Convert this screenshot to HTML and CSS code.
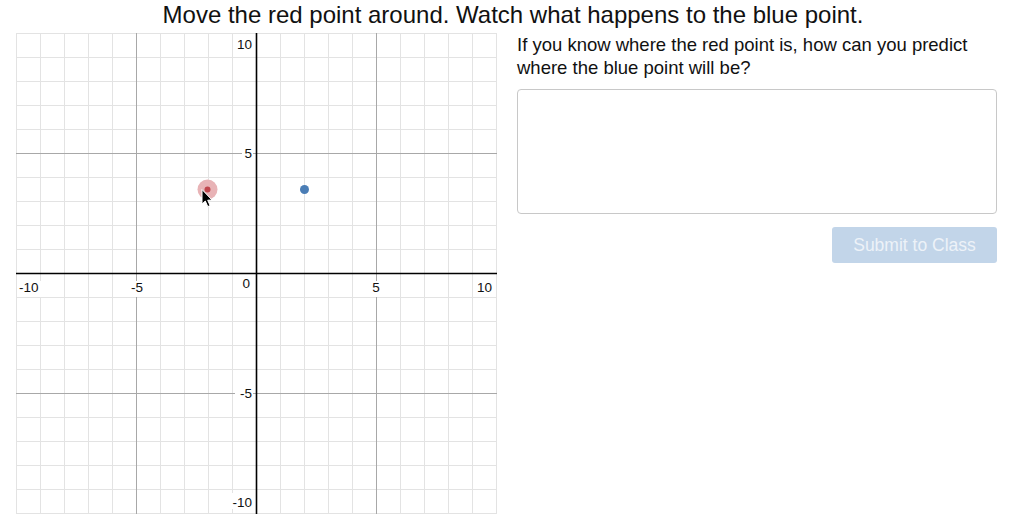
FILE: index.html
```html
<!DOCTYPE html>
<html>
<head>
<meta charset="utf-8">
<link rel="stylesheet" href="styles.css">
</head>
<body>
<h1 class="title">Move the red point around. Watch what happens to the blue point.</h1>
<main class="layout">
  <div class="graph">
    <svg width="481" height="481" viewBox="0 0 481 481" xmlns="http://www.w3.org/2000/svg">
      <g stroke="#e3e3e3" stroke-width="1" shape-rendering="crispEdges">
        <line x1="0.5" y1="0" x2="0.5" y2="481"/>
        <line x1="24.5" y1="0" x2="24.5" y2="481"/>
        <line x1="48.5" y1="0" x2="48.5" y2="481"/>
        <line x1="72.5" y1="0" x2="72.5" y2="481"/>
        <line x1="96.5" y1="0" x2="96.5" y2="481"/>
        <line x1="144.5" y1="0" x2="144.5" y2="481"/>
        <line x1="168.5" y1="0" x2="168.5" y2="481"/>
        <line x1="192.5" y1="0" x2="192.5" y2="481"/>
        <line x1="216.5" y1="0" x2="216.5" y2="481"/>
        <line x1="264.5" y1="0" x2="264.5" y2="481"/>
        <line x1="288.5" y1="0" x2="288.5" y2="481"/>
        <line x1="312.5" y1="0" x2="312.5" y2="481"/>
        <line x1="336.5" y1="0" x2="336.5" y2="481"/>
        <line x1="384.5" y1="0" x2="384.5" y2="481"/>
        <line x1="408.5" y1="0" x2="408.5" y2="481"/>
        <line x1="432.5" y1="0" x2="432.5" y2="481"/>
        <line x1="456.5" y1="0" x2="456.5" y2="481"/>
        <line x1="480.5" y1="0" x2="480.5" y2="481"/>
        <line y1="0.5" x1="0" y2="0.5" x2="481"/>
        <line y1="24.5" x1="0" y2="24.5" x2="481"/>
        <line y1="48.5" x1="0" y2="48.5" x2="481"/>
        <line y1="72.5" x1="0" y2="72.5" x2="481"/>
        <line y1="96.5" x1="0" y2="96.5" x2="481"/>
        <line y1="144.5" x1="0" y2="144.5" x2="481"/>
        <line y1="168.5" x1="0" y2="168.5" x2="481"/>
        <line y1="192.5" x1="0" y2="192.5" x2="481"/>
        <line y1="216.5" x1="0" y2="216.5" x2="481"/>
        <line y1="264.5" x1="0" y2="264.5" x2="481"/>
        <line y1="288.5" x1="0" y2="288.5" x2="481"/>
        <line y1="312.5" x1="0" y2="312.5" x2="481"/>
        <line y1="336.5" x1="0" y2="336.5" x2="481"/>
        <line y1="384.5" x1="0" y2="384.5" x2="481"/>
        <line y1="408.5" x1="0" y2="408.5" x2="481"/>
        <line y1="432.5" x1="0" y2="432.5" x2="481"/>
        <line y1="456.5" x1="0" y2="456.5" x2="481"/>
        <line y1="480.5" x1="0" y2="480.5" x2="481"/>
      </g>
      <g stroke="#a8a8a8" stroke-width="1" shape-rendering="crispEdges">
        <line x1="120.5" y1="0" x2="120.5" y2="481"/>
        <line x1="360.5" y1="0" x2="360.5" y2="481"/>
        <line y1="120.5" x1="0" y2="120.5" x2="481"/>
        <line y1="360.5" x1="0" y2="360.5" x2="481"/>
      </g>
      <g font-family="Liberation Sans, Arial, sans-serif" font-size="13.5" fill="#111">
        <rect x="219" y="3" width="18" height="16" fill="#fff"/>
        <text x="236" y="16" text-anchor="end">10</text>
        <rect x="226" y="112" width="11" height="16" fill="#fff"/>
        <text x="236" y="125" text-anchor="end">5</text>
        <text x="234" y="255" text-anchor="end">0</text>
        <rect x="219" y="352" width="18" height="16" fill="#fff"/>
        <text x="236" y="365" text-anchor="end">-5</text>
        <rect x="211" y="460" width="26" height="16" fill="#fff"/>
        <text x="236" y="474" text-anchor="end">-10</text>
        <rect x="2" y="248" width="24" height="16" fill="#fff"/>
        <text x="3" y="259">-10</text>
        <rect x="112" y="248" width="16" height="16" fill="#fff"/>
        <text x="121" y="259" text-anchor="middle">-5</text>
        <rect x="354" y="248" width="12" height="16" fill="#fff"/>
        <text x="360" y="259" text-anchor="middle">5</text>
        <rect x="457" y="248" width="20" height="16" fill="#fff"/>
        <text x="476" y="259" text-anchor="end">10</text>
      </g>
      <g stroke="#000" stroke-width="1.6">
        <line x1="240.5" y1="0" x2="240.5" y2="481"/>
        <line y1="240.5" x1="0" y2="240.5" x2="481"/>
      </g>
      <circle cx="191.5" cy="156.5" r="10" fill="#e8b3b6"/>
      <circle cx="191.5" cy="156.5" r="3" fill="#c0464d"/>
      <circle cx="288.5" cy="156.5" r="4.5" fill="#4a7db5"/>
      <path d="M186 156.5 L186 171 L189.3 168 L191.8 173.6 L194.1 172.6 L191.7 167.2 L196 167 Z" fill="#000" stroke="#fff" stroke-width="1" stroke-linejoin="round"/>
    </svg>
  </div>
  <section class="panel">
    <p class="prompt">If you know where the red point is, how can you predict where the blue point will be?</p>
    <textarea class="answer"></textarea>
    <div class="actions">
      <button class="submit" type="button">Submit to Class</button>
    </div>
  </section>
</main>
</body>
</html>
```

FILE: styles.css
```css
html, body {
  margin: 0;
  padding: 0;
  background: #fff;
}
body {
  font-family: "Liberation Sans", Arial, Helvetica, sans-serif;
  color: #111;
}
.title {
  margin: 0;
  padding-top: 1px;
  height: 31px;
  font-size: 24px;
  font-weight: normal;
  line-height: 28px;
  text-align: center;
  width: 1026px;
}
.layout {
  display: flex;
  align-items: flex-start;
  padding-left: 16px;
  padding-top: 1px;
  gap: 20px;
}
.graph {
  width: 481px;
  height: 481px;
  line-height: 0;
}
.graph svg {
  display: block;
}
.panel {
  width: 480px;
  display: flex;
  flex-direction: column;
}
.prompt {
  margin: 0;
  font-size: 18.5px;
  line-height: 23px;
  color: #111;
}
.answer {
  box-sizing: border-box;
  margin-top: 10px;
  width: 480px;
  height: 125px;
  border: 1px solid #c8c8c8;
  border-radius: 4px;
  resize: none;
  background: #fff;
}
.actions {
  display: flex;
  justify-content: flex-end;
  margin-top: 13px;
}
.submit {
  width: 165px;
  height: 36px;
  border: none;
  border-radius: 3px;
  background: #c2d5e9;
  color: #edf2f8;
  font-family: "Liberation Sans", Arial, sans-serif;
  font-size: 17.5px;
  padding: 0;
}
```
